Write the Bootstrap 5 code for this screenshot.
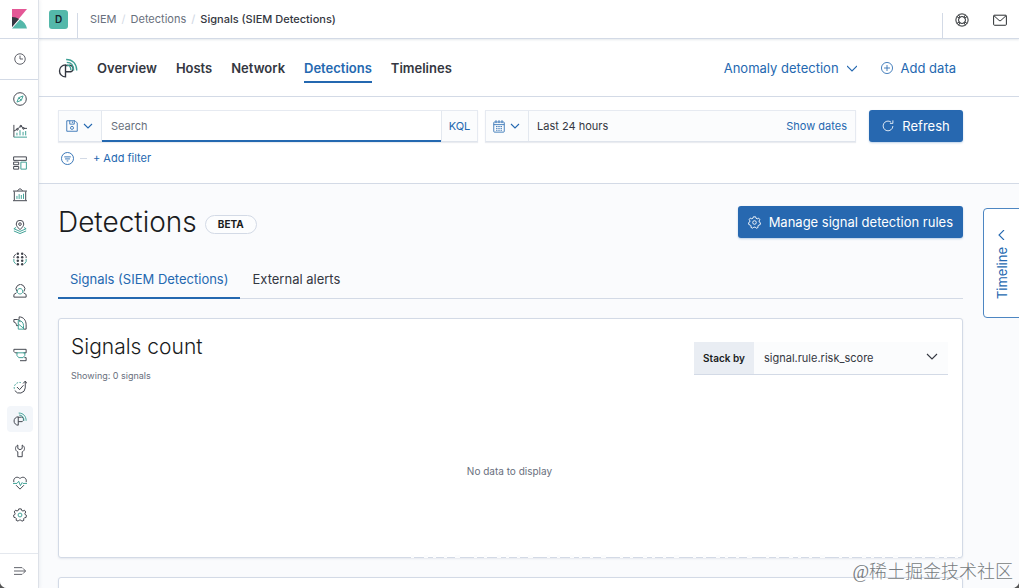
<!DOCTYPE html>
<html lang="en">
<head>
<meta charset="utf-8">
<meta name="viewport" content="width=device-width, initial-scale=1">
<title>Signals (SIEM Detections)</title>
<link href="https://cdn.jsdelivr.net/npm/bootstrap@5.3.0/dist/css/bootstrap.min.css" rel="stylesheet">
<style>
  :root { --ink:#343741; --blue:#2468b0; --line:#d3dae6; --pale:#fafbfd; --teal:#3c9f94; }
  body { font-family:Inter,"Noto Sans CJK SC",sans-serif; font-size:13px; line-height:20px; color:var(--ink); background:#555; }
  svg { display:block; flex:none; fill:none; stroke:currentColor; stroke-width:1.1; }
  svg .t { stroke:var(--teal); }
  a { text-decoration:none; color:var(--blue); }
  button { font:inherit; color:inherit; }
  .shell { border-radius:0 0 7px 7px; background:#fff; }
  .rail { width:39px; border-right:1px solid #dde1e8; box-shadow:1px 0 3px #98a2b326; z-index:2; }
  .rail a { color:#40434c; padding-left:1px; }
  .rail-logo { height:39px; border-bottom:1px solid var(--line); }
  .rail-recent { height:41px; border-bottom:1px solid var(--line); }
  .rail-list { padding-top:3px; }
  .rail-foot { height:35px; border-top:1px solid #e4e8ee; }
  .rail-item { height:32px; }
  .rail-item span { padding:6px; border-radius:4px; }
  .rail-item .on { background:#f3f6fa; }
  .topbar { height:39px; border-bottom:1px solid var(--line); box-shadow:0 1px 2px #98a2b340; font-size:11px; }
  .cell { height:25px; border-color:var(--line)!important; }
  .space-cell { width:39px; padding-left:10px; }
  .space-badge { width:19px; height:19px; margin-bottom:9px; border-radius:3px; background:#54b8aa; color:#17222b; font-size:10px; line-height:19px; font-weight:600; }
  .crumbs { --bs-breadcrumb-divider-color:#d3dae6; --bs-breadcrumb-item-padding-x:5px; }
  .crumbs a { color:#69707d; }
  .crumbs .active { color:#343741; font-weight:500; }
  .siem { height:58px; border-bottom:1px solid var(--line); padding:0 63px 0 19px; }
  .siem-tabs { gap:19px; }
  .siem-links { gap:19px; }
  .siem-links a { color:var(--ink); font-weight:600; height:29px; padding-top:4px; border-bottom:2px solid transparent; margin-top:2px; }
  .siem-links a.active { color:var(--blue); border-color:var(--blue); }
  .query { padding:13px 56px 15px 19px; border-bottom:1px solid var(--line); font-size:11px; }
  .field { height:32px; background:#fbfcfd; border:1px solid #e6eaf1; border-bottom-color:#dfe4ec; box-shadow:0 1px 1px #98a2b333; }
  .field button { background:transparent; color:var(--blue); border:0; }
  .field .menu-btn { width:43px; border-right:1px solid #e3e8ef; }
  .field .kql { width:36px; border-left:1px solid #e3e8ef; padding:0; }
  .field input { color:var(--ink); min-width:0; border:0; border-bottom:2px solid var(--blue); outline:0; padding:0 9px; background:#fff; margin-bottom:-1px; }
  .field input::placeholder { color:#69707d; }
  .range { width:371px; margin-left:7px; }
  .go { background:#2768b0; color:#fff; border:0; border-radius:3px; height:32px; padding:0 10px; font-size:13px; box-shadow:0 1px 2px #2468b04d; }
  .refresh { width:94px; margin-left:13px; }
  .filters { padding:6px 0 0 3px; gap:6px; }
  .filters i { width:7px; height:1px; background:var(--line); }
  .page { background:var(--pale); padding:22px 56px 0 19px; }
  .page h1 { font-size:28px; line-height:32px; font-weight:300; color:#1a1c21; }
  .beta { border:1px solid var(--line); border-radius:10px; height:19px; padding:0 12px; font-size:10px; line-height:17px; font-weight:700; color:#1a1c21; background:#fcfdfe; }
  .tabs { margin-top:22px; border-bottom:1px solid var(--line); }
  .tabs a { padding:9px 12px 8px; height:39px; border-bottom:2px solid transparent; color:var(--ink); margin-bottom:-1px; }
  .tabs a.active { color:var(--blue); border-color:var(--blue); }
  .panel { background:#fff; border:1px solid var(--line); border-radius:3px; box-shadow:0 1px 2px #98a2b333; height:240px; margin-top:19px; padding:15px 14px 0 12px; }
  .panel h2 { font-size:21px; line-height:26px; font-weight:300; color:#1a1c21; }
  .fine { font-size:9px; line-height:16px; color:#69707d; }
  .stack { height:33px; width:254px; margin-top:8px; border-bottom:1px solid var(--line); }
  .stack label { background:#e9edf3; width:60px; font-size:10px; font-weight:600; color:#1a1c21; }
  .stack select { appearance:none; border:0; background:transparent; color:var(--ink); padding:0 10px; font-size:11px; }
  .stack > div { background:#fbfcfd; }
  .chev { right:10px; top:9px; pointer-events:none; }
  .empty { font-size:10px; padding-top:79px; }
  .flyout { top:208px; right:-1px; width:37px; height:110px; border:1px solid #4d86c2; border-radius:4px 0 0 4px; background:#fff; color:var(--blue); z-index:3; padding:4px 0 0; gap:7px; }
  .flyout span { writing-mode:vertical-rl; transform:rotate(180deg); }
  .mark-line { right:0; bottom:-1px; width:61%; height:3px; }
  .credit { right:6px; bottom:4px; font:18px/24px "Liberation Serif","Noto Sans CJK SC",serif; font-weight:300; color:#777b80; z-index:4; }
</style>
</head>
<body>
<div class="shell d-flex vh-100 overflow-hidden position-relative">
  <nav class="rail d-flex flex-column flex-shrink-0 bg-white" aria-label="Applications">
    <a href="#" class="rail-logo d-flex justify-content-center align-items-center flex-shrink-0" aria-label="Home">
      <svg width="16" height="20" viewBox="0 0 16 20" style="stroke:none"><path fill="#e45796" d="M0 0h15L0 18z"/><path fill="#343741" d="M0 8c3 0 5 .8 7 2L0 18z"/><path fill="#54b8aa" d="M8 10.500c4 2 6 5 7 9H0z"/></svg>
    </a>
    <a href="#" class="rail-recent d-flex justify-content-center align-items-center flex-shrink-0" aria-label="Recently viewed"><svg width="12" height="12" viewBox="0 0 16 16"><circle cx="8" cy="8" r="7"/><path d="M8 3.500V8h4"/></svg></a>
    <div class="rail-list flex-grow-1 overflow-hidden">
      <a href="#" class="rail-item d-flex justify-content-center align-items-center" aria-label="Discover"><span><svg width="14" height="14" viewBox="0 0 16 16"><circle cx="8" cy="8" r="7.200"/><path class="t" d="M11.500 4.500 9.500 9.500l-5 2 2-5zM6.500 6.500l3 3"/></svg></span></a>
      <a href="#" class="rail-item d-flex justify-content-center align-items-center" aria-label="Visualize"><span><svg width="14" height="14" viewBox="0 0 16 16"><path d="M1 1v14M1 8l4-2 4-4 3 3 4 0"/><path class="t" d="M1 15h15M4.500 10v3M8 7v6M11.500 9v4M14.500 8v5"/><circle cx="5" cy="6" r="1"/><circle cx="9" cy="2.500" r="1"/><circle cx="12" cy="5" r="1"/></svg></span></a>
      <a href="#" class="rail-item d-flex justify-content-center align-items-center" aria-label="Dashboard"><span><svg width="14" height="14" viewBox="0 0 16 16"><path d="M.7 1h14.600v4H.7zM.7 7h5.800v3H.7zM.7 12h5.800v3H.7z"/><path class="t" d="M9 7h6.300v8H9z"/></svg></span></a>
      <a href="#" class="rail-item d-flex justify-content-center align-items-center" aria-label="Canvas"><span><svg width="14" height="14" viewBox="0 0 16 16"><path d="M0 3.500h16M1.500 4v10M14.500 4v10M0 14.500h16M5 3l3-2.300L11 3"/><path class="t" d="M4.500 9v3.500M7 7v5.500M9.500 8v4.500M12 6.500v6"/></svg></span></a>
      <a href="#" class="rail-item d-flex justify-content-center align-items-center" aria-label="Maps"><span><svg width="14" height="14" viewBox="0 0 16 16"><path d="M8 11C5 8 3.700 6.500 3.700 4.600a4.300 4.300 0 0 1 8.600 0C12.300 6.500 11 8 8 11z"/><circle cx="8" cy="4.700" r="1.500"/><path class="t" d="M3.500 8.500 1 10l7 3 7-3-2.500-1.500M1 12.500l7 3 7-3"/></svg></span></a>
      <a href="#" class="rail-item d-flex justify-content-center align-items-center" aria-label="Machine learning"><span><svg width="14" height="14" viewBox="0 0 16 16"><g fill="currentColor" stroke="none"><circle cx="5.500" cy="2" r="1.400"/><circle cx="10.500" cy="2" r="1.400"/><circle cx="5.500" cy="6" r="1.400"/><circle cx="10.500" cy="6" r="1.400"/><circle cx="5.500" cy="10" r="1.400"/><circle cx="10.500" cy="10" r="1.400"/><circle cx="5.500" cy="14" r="1.400"/><circle cx="10.500" cy="14" r="1.400"/></g><path d="M3 2.500 1 5v2M13 2.500 15 5v2"/><path class="t" d="M1 8v3l2 2.500M15 8v3l-2 2.500"/></svg></span></a>
      <a href="#" class="rail-item d-flex justify-content-center align-items-center" aria-label="Infrastructure"><span><svg width="14" height="14" viewBox="0 0 16 16"><path d="M4.500 8.500a5 5 0 1 1 8 0M4 10l-3 2v3h14v-3l-3-2"/><path class="t" d="M5 9.500a3.200 3.200 0 1 1 6 0c-1 2.500-5 2.500-6 0z"/></svg></span></a>
      <a href="#" class="rail-item d-flex justify-content-center align-items-center" aria-label="Logs"><span><svg width="14" height="14" viewBox="0 0 16 16"><path d="M7 4V1c5 0 8 4 8 9v5M1 4h4c2 0 3 1 3 3M1 4v3c2 0 3 2 3 4h2M12 15h3"/><path class="t" d="M6 5c4 0 6 3 6 6v4H6zM6 9l6 5"/></svg></span></a>
      <a href="#" class="rail-item d-flex justify-content-center align-items-center" aria-label="APM"><span><svg width="14" height="14" viewBox="0 0 16 16"><path d="M5 5.500H2.500L1 4V1.500h14v4h-3M8 14.500h7V11h-2"/><path class="t" d="M4.500 5.500h9v3l-2 2.500h-5l-2-2.500z"/></svg></span></a>
      <a href="#" class="rail-item d-flex justify-content-center align-items-center" aria-label="Uptime"><span><svg width="14" height="14" viewBox="0 0 16 16"><path d="M2 12a6.500 6.500 0 0 0 12-3V2M11.500 4 14 1.200 16 4"/><path d="m4.500 8 3 3 4.500-5"/><path class="t" stroke-dasharray="2 1.500" d="M1.500 10A6 6 0 0 1 9 3"/></svg></span></a>
      <a href="#" class="rail-item d-flex justify-content-center align-items-center" aria-label="SIEM"><span class="on"><svg width="14" height="14" viewBox="0 0 16 16"><path d="M6 5.500a4.800 4.800 0 1 0 0 9.600zM6 6h2a2.500 2.500 0 0 1 2.500 5H6"/><path class="t" d="M7 3.500c3.500 0 5.500 2.500 5.500 6.500M6.500 1.200C12 1.200 15 5 15 10"/></svg></span></a>
      <a href="#" class="rail-item d-flex justify-content-center align-items-center" aria-label="Dev tools"><span><svg width="14" height="14" viewBox="0 0 16 16"><path d="M5.500 1.200v4L8 6.500l2.500-1.300v-4C14 3 14 7.500 10.500 9v5.500h-5V9C2 7.500 2 3 5.500 1.200z"/></svg></span></a>
      <a href="#" class="rail-item d-flex justify-content-center align-items-center" aria-label="Monitoring"><span><svg width="14" height="14" viewBox="0 0 16 16"><path d="M1 7C0 3 3 1 5.500 1.500 7 1.800 8 3 8 3s1-1.200 2.500-1.500C13 1 16 3 15 7M3.500 10.500 8 15l4.500-4.500"/><path class="t" d="M0 8.500h4.500L6.500 6l2 5 2-3.500 1 1H16"/></svg></span></a>
      <a href="#" class="rail-item d-flex justify-content-center align-items-center" aria-label="Management"><span><svg width="14" height="14" viewBox="0 0 16 16"><path d="M6.600 1h2.800l.5 1.800 1.500.7 1.700-.9 1.500 2-1 1.500.3 1.500 1.500.8-.5 2.500-1.700.2-1 1.200.2 1.800-2.300 1-1.200-1.400H7.200L5.900 15l-2.300-1 .2-1.800-1-1.200-1.700-.3L.6 8.300l1.500-.8.3-1.500-1-1.500 1.500-2 1.700.9 1.500-.7z"/><circle class="t" cx="8" cy="8" r="2.200"/></svg></span></a>
    </div>
    <a href="#" class="rail-foot d-flex justify-content-center align-items-center flex-shrink-0" aria-label="Expand navigation"><svg width="12" height="12" viewBox="0 0 16 16"><path d="M0 3.500h11M0 8h15M0 12.500h11M12 4.500 15.500 8 12 11.500"/></svg></a>
  </nav>

  <div class="flex-grow-1 d-flex flex-column overflow-hidden">
    <header class="topbar d-flex align-items-end flex-shrink-0 bg-white">
      <div class="cell space-cell border-end d-flex align-items-end"><button class="space-badge border-0 p-0" aria-label="Default space">D</button></div>
      <nav class="ms-2 ps-1 align-self-center flex-grow-1" aria-label="Breadcrumb"><ol class="breadcrumb crumbs mb-0">
        <li class="breadcrumb-item"><a href="#">SIEM</a></li><li class="breadcrumb-item"><a href="#">Detections</a></li><li class="breadcrumb-item active" aria-current="page">Signals (SIEM Detections)</li></ol></nav>
      <div class="cell border-start d-flex gap-4 ps-2 pe-2">
        <a href="#" class="text-dark ms-1" aria-label="Help"><svg width="14" height="14" viewBox="0 0 16 16"><circle cx="8" cy="8" r="7"/><circle cx="8" cy="8" r="4"/><path d="m2 4 3 2M4 2l2 3M12 2l-2 3M14 4l-3 2M2 12l3-2M4 14l2-3M14 12l-3-2M12 14l-2-3"/></svg></a>
        <a href="#" class="text-dark me-1" aria-label="News"><svg width="14" height="14" viewBox="0 0 16 16"><rect x=".7" y="2.500" width="14.600" height="11.500" rx="1"/><path d="m1 3 6 5.500q1 .8 2 0L15 3"/></svg></a>
      </div>
    </header>

    <div class="siem d-flex align-items-center justify-content-between flex-shrink-0">
      <nav class="siem-tabs d-flex align-items-center" aria-label="SIEM">
        <svg width="20" height="20" viewBox="0 0 16 16" stroke-width="1"><path d="M6 5.500a4.800 4.800 0 1 0 0 9.600zM6 6h2a2.500 2.500 0 0 1 2.500 5H6"/><path class="t" d="M7 3.500c3.500 0 5.500 2.500 5.500 6.500M6.500 1.200C12 1.200 15 5 15 10M7 5.700c2 0 3.300 1.500 3.300 4"/></svg>
        <div class="d-flex siem-links"><a href="#">Overview</a><a href="#">Hosts</a><a href="#">Network</a><a href="#" class="active" aria-current="page">Detections</a><a href="#">Timelines</a></div>
      </nav>
      <div class="d-flex align-items-center gap-4">
        <a href="#" class="d-flex align-items-center gap-2">Anomaly detection <svg width="10" height="10" viewBox="0 0 10 10"><path d="m0 3 5 5 5-5"/></svg></a>
        <a href="#" class="d-flex align-items-center gap-2"><svg width="12" height="12" viewBox="0 0 16 16"><circle cx="8" cy="8" r="7.400"/><path d="M8 4v8M4 8h8"/></svg> Add data</a>
      </div>
    </div>

    <div class="query flex-shrink-0">
      <div class="d-flex">
        <div class="field d-flex flex-grow-1">
          <button class="menu-btn d-flex align-items-center justify-content-center gap-1 p-0" aria-label="Saved queries"><svg width="12" height="12" viewBox="0 0 16 16"><path d="M1 1h11l3 3v11H1zM5 1v4.500h6V1M8.500 2v2"/><circle cx="8" cy="10.500" r="2"/></svg><svg width="12" height="10" viewBox="0 0 12 10"><path d="m2 3 4 4 4-4"/></svg></button>
          <input class="flex-grow-1" type="text" placeholder="Search" aria-label="Search">
          <button class="kql">KQL</button>
        </div>
        <div class="field range d-flex">
          <button class="menu-btn d-flex align-items-center justify-content-center gap-1 p-0" aria-label="Quick time ranges"><svg width="12" height="13" viewBox="0 0 16 17"><rect x="1" y="2.500" width="14" height="13.500" rx="1"/><path d="M1 6h14M4 0v4M8 0v4M12 0v4"/><path stroke-dasharray="2 1" d="M4 8.500h8M4 11h8M4 13.500h8"/></svg><svg width="12" height="10" viewBox="0 0 12 10"><path d="m2 3 4 4 4-4"/></svg></button>
          <span class="flex-grow-1 align-self-center ps-1 ms-1">Last 24 hours</span>
          <button class="px-2">Show dates</button>
        </div>
        <button class="go refresh d-flex align-items-center justify-content-center gap-2"><svg width="12" height="12" viewBox="0 0 16 16"><path d="M14.500 8A6.500 6.500 0 1 1 12 2.800M10.500 4.500h4V.5"/></svg>Refresh</button>
      </div>
      <div class="filters d-flex align-items-center">
        <a href="#" aria-label="Filter options"><svg width="13" height="13" viewBox="0 0 16 16"><circle cx="8" cy="8" r="7.400"/><path d="M4 6h8M5 8.500h6M7 11h2"/></svg></a>
        <i></i>
        <a href="#">+ Add filter</a>
      </div>
    </div>

    <main class="page flex-grow-1 overflow-hidden">
      <div class="d-flex align-items-center justify-content-between">
        <div class="d-flex align-items-center"><h1 class="mb-0 me-2">Detections</h1><span class="beta mt-1">BETA</span></div>
        <button class="go d-flex align-items-center gap-2"><svg width="13" height="13" viewBox="0 0 16 16"><path d="M6.600 1h2.800l.5 1.800 1.500.7 1.700-.9 1.500 2-1 1.500.3 1.500 1.500.8-.5 2.500-1.700.2-1 1.200.2 1.800-2.300 1-1.200-1.400H7.200L5.900 15l-2.300-1 .2-1.800-1-1.200-1.700-.3L.6 8.300l1.500-.8.3-1.500-1-1.500 1.500-2 1.700.9 1.500-.7z"/><circle cx="8" cy="8" r="2.200"/></svg>Manage signal detection rules</button>
      </div>
      <nav class="tabs d-flex" aria-label="Signal type"><a href="#" class="active" aria-current="page">Signals (SIEM Detections)</a><a href="#">External alerts</a></nav>
      <section class="panel position-relative">
        <div class="d-flex justify-content-between">
          <div><h2 class="mb-2">Signals count</h2><p class="fine mb-0">Showing: 0 signals</p></div>
          <div class="stack d-flex"><label for="stackBy" class="d-flex align-items-center justify-content-center flex-shrink-0">Stack by</label>
            <div class="flex-grow-1 position-relative"><select id="stackBy" class="w-100 h-100"><option>signal.rule.risk_score</option></select><svg class="chev position-absolute" width="12" height="12" viewBox="0 0 12 12"><path d="m1 3 5 5 5-5"/></svg></div></div>
        </div>
        <p class="fine empty text-center mb-0">No data to display</p>
        <svg class="mark-line position-absolute" aria-hidden="true"><path stroke="#fbfcfd" stroke-width="4" stroke-dasharray="3 10 4 5 3 8 3 8 5 14 3 7" d="M0 1.500h900"/></svg>
      </section>
      <section class="panel" aria-label="Signals"></section>
    </main>
  </div>
  <button class="flyout position-absolute d-flex flex-column align-items-center justify-content-center"><svg width="10" height="10" viewBox="0 0 10 10"><path d="M7 0 2 5l5 5"/></svg><span>Timeline</span></button>
  <div class="credit position-absolute">@稀土掘金技术社区</div>
</div>
<script src="https://cdn.jsdelivr.net/npm/bootstrap@5.3.0/dist/js/bootstrap.bundle.min.js"></script>
</body>
</html>
